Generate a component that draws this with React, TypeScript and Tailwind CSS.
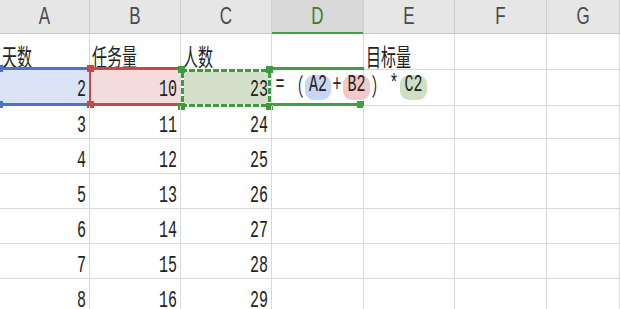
const COL_W = ['w-[90px]', 'w-[91px]', 'w-[91px]', 'w-[92px]', 'w-[91px]', 'w-[92px]', 'flex-1']
const HEADERS = ['A', 'B', 'C', 'D', 'E', 'F', 'G']
const ROW_H = ['h-[36px]', 'h-[36px]', 'h-[33px]', 'h-[35px]', 'h-[35px]', 'h-[35px]', 'h-[35px]', 'h-[35px]']

const num = "inline-block font-['Liberation_Mono',monospace] text-[15px] leading-[15px] text-[#222] scale-y-[1.55] origin-bottom"
const cjk = "inline-block font-['Noto_Sans_CJK_SC','Noto_Sans',sans-serif] text-[15px] leading-[15px] text-[#222] scale-y-[1.6] origin-bottom"

const rows: (string | number | null)[][] = [
  ['天数', '任务量', '人数', null, '目标量', null, null],
  [2, 10, 23, null, null, null, null],
  [3, 11, 24, null, null, null, null],
  [4, 12, 25, null, null, null, null],
  [5, 13, 26, null, null, null, null],
  [6, 14, 27, null, null, null, null],
  [7, 15, 28, null, null, null, null],
  [8, 16, 29, null, null, null, null],
]

// fills of the referenced cells in row 2
const FILL = ['bg-[#dbe4f6]', 'bg-[#f4dcdc]', 'bg-[#d5e0cb]', '', '', '', '']

function Token({ children, w, pill, mono = true }: { children: string; w: string; pill?: string; mono?: boolean }) {
  return (
    <div className={`${w} h-[25px] flex items-end justify-center pb-[3px] rounded-[9px] ${pill ?? ''}`}>
      <span className={mono ? num : cjk}>{children}</span>
    </div>
  )
}

// formula text overflows from D2 into E2
function Formula() {
  return (
    <div className="absolute left-[1px] top-[5px] flex z-10">
      <Token w="w-[14px]">=</Token>
      <Token w="w-[18px]" mono={false}>（</Token>
      <Token w="w-[26px]" pill="bg-[#c8d6f1]">A2</Token>
      <Token w="w-[12px]">+</Token>
      <Token w="w-[27px]" pill="bg-[#f1c9c9]">B2</Token>
      <Token w="w-[18px]" mono={false}>）</Token>
      <Token w="w-[12px]">*</Token>
      <Token w="w-[27px]" pill="bg-[#cfdfc4]">C2</Token>
    </div>
  )
}

function Handle({ pos, color }: { pos: string; color: string }) {
  return <div className={`absolute w-[7px] h-[7px] ${pos} ${color}`} />
}

// range borders drawn over row 2 cells
function RangeA() {
  return (
    <div className="absolute left-0 right-[1px] top-[-3px] bottom-[-1px] border-y-[3px] border-[#4a73cc]">
      <Handle pos="left-[-4px] top-[-5px]" color="bg-[#4a73cc]" />
      <Handle pos="left-[-4px] bottom-[-5px]" color="bg-[#4a73cc]" />
    </div>
  )
}

function RangeB() {
  return (
    <div className="absolute left-[-1px] right-[-1px] top-[-3px] bottom-[-1px] border-y-[3px] border-l-2 border-[#c9474a]">
      <Handle pos="left-[-4px] top-[-5px]" color="bg-[#c9474a]" />
      <Handle pos="left-[-4px] bottom-[-5px]" color="bg-[#c9474a]" />
    </div>
  )
}

function RangeC() {
  const dashH = 'bg-[repeating-linear-gradient(90deg,#3d9a3d_0_6px,#ffffff_6px_8px)]'
  const dashV = 'bg-[repeating-linear-gradient(180deg,#3d9a3d_0_6px,#ffffff_6px_8px)]'
  return (
    <div className="absolute left-0 right-0 top-[-1px] bottom-[-2px] flex flex-col justify-between">
      <div className={`h-[3px] ${dashH}`} />
      <div className="flex-1 flex justify-between">
        <div className={`w-[3px] ${dashV}`} />
        <div className={`w-[3px] ${dashV}`} />
      </div>
      <div className={`h-[3px] ${dashH}`} />
      <Handle pos="left-[-3px] top-[-3px]" color="bg-[#3d9a3d]" />
      <Handle pos="right-[-2px] top-[-3px]" color="bg-[#3d9a3d]" />
      <Handle pos="left-[-3px] bottom-[-3px]" color="bg-[#3d9a3d]" />
      <Handle pos="right-[-2px] bottom-[-3px]" color="bg-[#3d9a3d]" />
    </div>
  )
}

function ActiveD() {
  return (
    <div className="absolute left-[1px] right-[-1px] top-[-3px] bottom-[-1px] flex flex-col justify-between">
      <div className="h-[3px] bg-[#3fa03f]" />
      <div className="h-[3px] mr-[3px] bg-[#3fa03f]" />
      <Handle pos="right-0 bottom-[-2px]" color="bg-[#3fa03f]" />
    </div>
  )
}

const OVERLAY = [RangeA, RangeB, RangeC, ActiveD]

export default function App() {
  return (
    <div className="w-[620px] h-[309px] overflow-hidden bg-white">
      {/* column headers */}
      <div className="flex h-[34px] bg-[#e6e6e6] border-b border-[#c6c6c6]">
        {HEADERS.map((h, i) => (
          <div
            key={h}
            className={`${COL_W[i]} relative shrink-0 flex items-center justify-center border-r border-[#d0d0d0] ${
              h === 'D' ? 'bg-[#d9d9d9]' : ''
            }`}
          >
            <span
              className={`inline-block font-['Liberation_Sans',sans-serif] text-[17px] leading-[17px] scale-y-[1.45] mb-[1px] ${
                h === 'D' ? 'text-[#3c7d2a]' : 'text-[#4a4a4a]'
              }`}
            >
              {h}
            </span>
            {h === 'D' && <div className="absolute left-0 right-0 bottom-[-1px] h-[2px] bg-[#3fa03f]" />}
          </div>
        ))}
      </div>

      {rows.map((row, r) => (
        <div key={r} className={`flex ${ROW_H[r]}`}>
          {row.map((v, c) => {
            const Overlay = r === 1 ? OVERLAY[c] : undefined
            return (
              <div
                key={c}
                className={`${COL_W[c]} shrink-0 relative flex items-end border-r border-b border-[#d9d9d9] ${
                  r === 1 ? FILL[c] : ''
                } ${typeof v === 'number' ? 'justify-end pr-[3px]' : 'justify-start pl-[2px]'} ${
                  r === 1 ? 'pb-[3px]' : typeof v === 'string' ? 'pb-[1px]' : ''
                }`}
              >
                {v !== null && <span className={`relative ${typeof v === 'number' ? num : cjk}`}>{v}</span>}
                {Overlay && <Overlay />}
                {r === 1 && c === 3 && <Formula />}
              </div>
            )
          })}
        </div>
      ))}
    </div>
  )
}
